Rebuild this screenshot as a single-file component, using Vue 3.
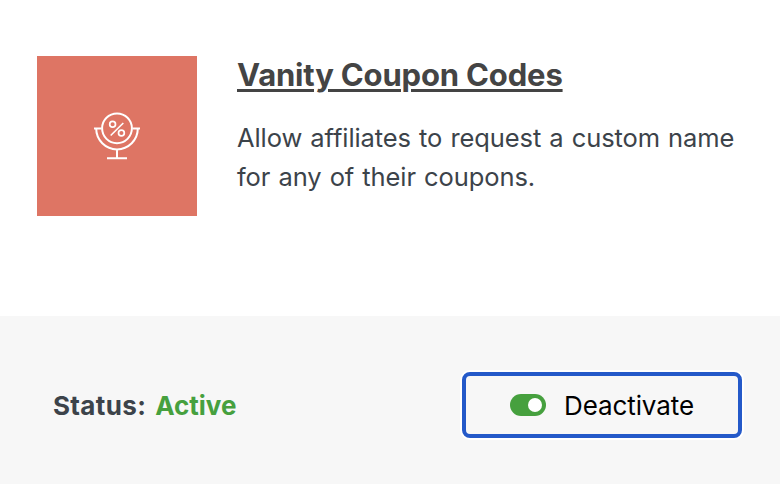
<template>
  <div class="addon">
    <div class="addon-body">
      <div class="addon-icon">
        <svg width="50" height="50" viewBox="0 0 50 50" fill="none" stroke="#fff" stroke-width="2">
          <circle cx="25" cy="17.3" r="14.9" />
          <path d="M2 17.6H9.5M40.500 17.600H48M4.200 17.600A20.800 20.800 0 0 0 45.800 17.600M25 38.500V47.200M15 47.200H35" />
          <path d="M18.700 24.500L31.300 12" stroke-width="1.600" />
          <circle cx="20.600" cy="13.200" r="2.900" stroke-width="1.700" />
          <circle cx="29.400" cy="22" r="2.900" stroke-width="1.700" />
        </svg>
      </div>
      <div class="addon-text">
        <h5><a href="#" @click.prevent>Vanity Coupon Codes</a></h5>
        <p>Allow affiliates to request a custom name <br />for any of their coupons.</p>
      </div>
    </div>
    <div class="addon-footer">
      <div class="status">
        <span class="status-title">Status:</span>
        <span class="status-label" :class="{ active }">{{ active ? 'Active' : 'Inactive' }}</span>
      </div>
      <button type="button" @click="active = !active">
        <span class="toggle" :class="{ on: active }"></span>
        <span class="button-label">{{ active ? 'Deactivate' : 'Activate' }}</span>
      </button>
    </div>
  </div>
</template>

<script setup>
import { ref } from 'vue';

const active = ref(true);
</script>

<style>
body {
  margin: 0;
  background: #fff;
}
</style>

<style scoped>
.addon {
  display: flex;
  flex-direction: column;
  height: 484px;
  overflow: hidden;
  font-family: Inter, "Liberation Sans", sans-serif;
  color: #3c434a;
}
.addon-body {
  display: flex;
  gap: 40px;
  height: 316px;
  padding: 56px 0 0 37px;
  box-sizing: border-box;
}
.addon-icon {
  display: flex;
  align-items: center;
  justify-content: center;
  width: 160px;
  height: 160px;
  flex: none;
  background: #de7564;
}
.addon-text {
  white-space: nowrap;
}
h5 {
  margin: 0;
  font-size: 31px;
  line-height: 38px;
  font-weight: 700;
  letter-spacing: -0.17px;
}
h5 a {
  color: #444;
  text-decoration: underline;
  text-decoration-thickness: 3px;
  text-underline-offset: 3px;
}
p {
  margin: 24px 0 0;
  font-size: 25.5px;
  line-height: 39px;
  letter-spacing: -0.08px;
  word-spacing: 1px;
}
.addon-footer {
  display: flex;
  align-items: center;
  justify-content: space-between;
  height: 168px;
  padding: 0 38px 0 53px;
  box-sizing: border-box;
  background: #f7f7f7;
}
.status {
  display: flex;
  gap: 9px;
  margin-top: 12px;
  font-size: 26px;
  line-height: 32px;
  font-weight: 700;
}
.status-title {
  letter-spacing: 0.35px;
}
.status-label.active {
  color: #46a03e;
}
button {
  display: flex;
  align-items: center;
  justify-content: center;
  gap: 18px;
  width: 280px;
  height: 66px;
  margin-top: 10px;
  padding: 0;
  border: 4px solid #2459c9;
  border-radius: 8px;
  box-shadow: 0 0 0 2px #fff;
  background: #f7f7f7;
  color: #000;
  font-family: inherit;
  font-size: 26px;
  cursor: pointer;
}
.button-label {
  padding-top: 1px;
  letter-spacing: -0.1px;
}
.toggle {
  display: flex;
  align-items: center;
  width: 36px;
  height: 22px;
  padding: 0 4px;
  box-sizing: border-box;
  border-radius: 11px;
  background: #888;
}
.toggle::before {
  content: "";
  width: 14px;
  height: 14px;
  border-radius: 50%;
  background: #fff;
}
.toggle.on {
  justify-content: flex-end;
  background: #46a03e;
}
</style>
